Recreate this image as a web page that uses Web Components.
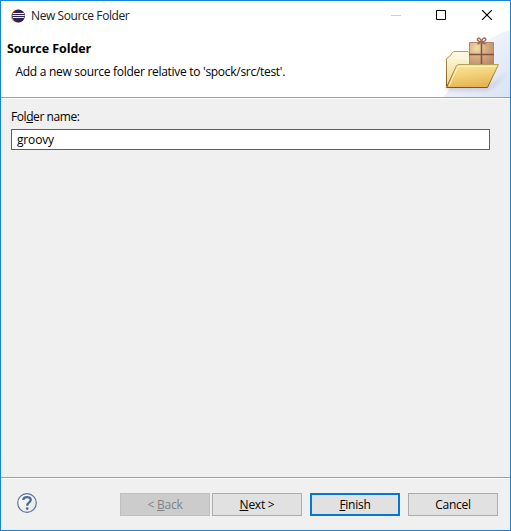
<!DOCTYPE html>
<html lang="en">
<head>
<meta charset="utf-8">
<title>New Source Folder</title>
<style>
html,body{margin:0;height:100%;overflow:hidden}
body{font:12px/16px "Open Sans","Noto Sans",sans-serif;color:#000}
</style>
</head>
<body>
<wizard-window>
  <title-bar slot="title">New Source Folder</title-bar>
  <wizard-header slot="header"><span slot="heading">Source Folder</span>Add a new source folder relative to 'spock/src/test'.</wizard-header>
  <text-field value="groovy">Fol<u>d</u>er name:</text-field>
  <wizard-footer slot="footer">
    <push-button disabled>&lt; <u>B</u>ack</push-button>
    <push-button><u>N</u>ext &gt;</push-button>
    <push-button primary class="gap"><u>F</u>inish</push-button>
    <push-button class="gap">Cancel</push-button>
  </wizard-footer>
</wizard-window>
<script>
function define(name, html) {
  const t = document.createElement('template');
  t.innerHTML = html;
  customElements.define(name, class extends HTMLElement {
    constructor() {
      super();
      this.attachShadow({mode: 'open'}).append(t.content.cloneNode(true));
    }
    connectedCallback() {
      const v = this.shadowRoot.querySelector('[data-value]');
      if (v) v.textContent = this.getAttribute('value');
    }
  });
}

define('wizard-window', `<style>
:host{display:flex;flex-direction:column;box-sizing:border-box;width:511px;height:531px;border:1px solid #1883d7;background:#f0f0f0}
main{flex:1;padding:11px 20px 0 10px}
</style><slot name="title"></slot><slot name="header"></slot><main><slot></slot></main><slot name="footer"></slot>`);

define('title-bar', `<style>
:host{display:flex;height:29px;align-items:center;background:#fff;padding-left:10px;color:#222}
.name{margin-left:6px;letter-spacing:-.41px;flex:1}
svg{display:block}
.controls{margin-right:18px;margin-top:-1px}
</style>
<svg width="14" height="14" viewBox="0 0 14 14"><circle cx="6.600" cy="7" r="6.600" fill="#f59a32"/><circle cx="7.500" cy="7" r="6.500" fill="#2c2255"/><path d="M2 4.500h11M1.500 6.500h12.200M1.800 8.500h11.500" stroke="#f2f0fa" stroke-width="1"/></svg>
<span class="name"><slot></slot></span>
<svg class="controls" width="101" height="10" viewBox="0 0 101 10" fill="none"><path d="M0 5.500h10" stroke="#ccc"/><path d="M45.500 .5h9v9h-9z" stroke="#000"/><path d="M91 0l10 10M101 0L91 10" stroke="#000" stroke-width="1.100"/></svg>`);

define('wizard-header', `<style>
:host{display:flex;height:67px;background:#fff;border-bottom:1px solid #a0a0a0;box-shadow:0 1px #fff}
.copy{flex:1;padding:10px 0 0 6px}
.heading{font-weight:700;font-size:12.5px;letter-spacing:-.06px;line-height:17px}
.text{padding:7px 0 0 8.5px;letter-spacing:-.29px}
svg{display:block}
</style>
<div class="copy"><div class="heading"><slot name="heading"></slot></div><div class="text"><slot></slot></div></div>
<svg width="79" height="67" viewBox="431 30 79 67">
<defs>
<linearGradient id="sky" x1="0" y1="0" x2="1" y2="1"><stop offset="0" stop-color="#fff"/><stop offset=".45" stop-color="#eef2fb"/><stop offset="1" stop-color="#d9e2f5"/></linearGradient>
<linearGradient id="front" x1="0" y1="0" x2=".3" y2="1"><stop offset="0" stop-color="#fae79f"/><stop offset=".5" stop-color="#f3d37b"/><stop offset="1" stop-color="#e5b653"/></linearGradient>
<linearGradient id="back" x1="0" y1="0" x2="0" y2="1"><stop offset="0" stop-color="#fffbe5"/><stop offset="1" stop-color="#edd58b"/></linearGradient>
<radialGradient id="box" cx=".3" cy=".25" r=".9"><stop offset="0" stop-color="#f1dfa9"/><stop offset=".45" stop-color="#d6ad80"/><stop offset="1" stop-color="#b98565"/></radialGradient>
<linearGradient id="edge" x1="0" y1="0" x2="0" y2="1"><stop offset="0" stop-color="#b3a154"/><stop offset="1" stop-color="#7b5718"/></linearGradient>
<filter id="blur" x="-30%" y="-60%" width="160%" height="220%"><feGaussianBlur stdDeviation="2"/></filter>
</defs>
<path d="M511 30C491 35 472 49 463 67C457 79 451 89 443 97H511z" fill="url(#sky)"/>
<path d="M446 86L489 87L508 72L495 85L488 90H447z" fill="#817999" opacity=".4" filter="url(#blur)"/>
<path d="M446.500 86V58.500L449.500 56.500L452.500 52.500L454 51.500H468L470.500 54V56.500H484V64L448 87z" fill="url(#back)" stroke="url(#edge)"/>
<path d="M449 58h17l3 2" fill="none" stroke="#fffdf0"/>
<path d="M469.500 42.500h24v23h-24z" fill="url(#box)" stroke="#b2886b"/>
<path d="M469 54.500h25M481.500 42v23" stroke="#805044" stroke-width="1.500"/>
<path d="M481.500 42C479 42 476 39.500 478 38.500S481 40 481.500 42C482 39 484 37 485.500 38.500S484 42 481.500 42l-4 2m4-2l4 2" fill="none" stroke="#a06a56" stroke-width="1.400"/>
<path d="M446.500 87.500L456.500 65.500L459 64.500H498.500L487.500 87.500z" fill="url(#front)" stroke="url(#edge)"/>
<path d="M449 86L458 66.500H496" fill="none" stroke="#fff3b9"/>
</svg>`);

define('text-field', `<style>
:host{display:block}
.box{box-sizing:border-box;height:21px;border:1px solid #0078d7;background:#fff;margin-top:4px;padding:2px 5px;letter-spacing:-.15px}
label{display:block;letter-spacing:-.42px}
</style><label><slot></slot></label><div class="box" data-value></div>`);

define('wizard-footer', `<style>
:host{display:flex;height:37px;border-top:1px solid #a0a0a0;box-shadow:inset 0 1px #fff;padding:15px 12px 0 16px;align-items:flex-start;gap:2px;box-sizing:content-box}
svg{display:block;margin-right:auto}
::slotted(.gap){margin-left:6px}
</style>
<svg width="20" height="20" viewBox="0 0 20 20"><defs><linearGradient id="g" x1="0" y1="0" x2="1" y2="1"><stop offset="0" stop-color="#fff"/><stop offset="1" stop-color="#e3e4e6"/></linearGradient></defs><circle cx="10" cy="10" r="9.300" fill="url(#g)" stroke="#5d7298" stroke-width="1.200"/><path d="M6.300 7C6.400 3.300 13.800 3.100 13.800 6.800C13.800 9.500 10.200 9.300 10.200 12.800" fill="none" stroke="#536a94" stroke-width="2.300"/><circle cx="10.200" cy="15.600" r="1.350" fill="#536a94"/></svg>
<slot></slot>`);

define('push-button', `<style>
:host{box-sizing:border-box;display:flex;align-items:center;justify-content:center;width:90px;height:23px;border:1px solid #adadad;background:#e1e1e1;letter-spacing:-.25px}
:host([primary]){border:2px solid #0078d7}
:host([disabled]){background:#ccc;border-color:#bfbfbf;color:#838383}
</style><span><slot></slot></span>`);
</script>
</body>
</html>
